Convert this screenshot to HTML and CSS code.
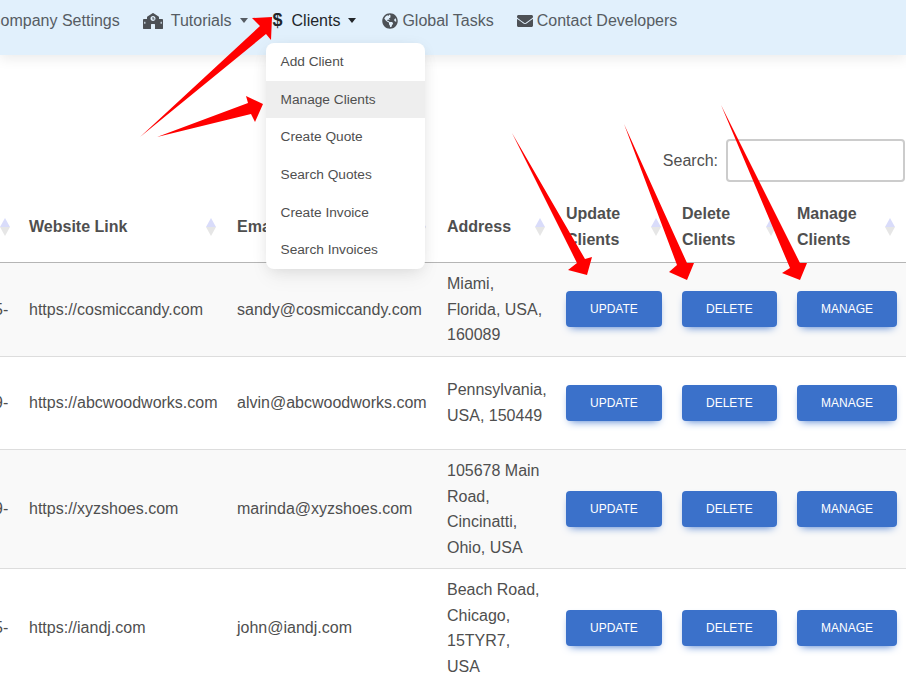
FILE: index.html
```html
<!DOCTYPE html>
<html lang="en">
<head>
    <meta charset="utf-8">
    <title>Manage Clients</title>
    <link rel="stylesheet" href="styles.css">
</head>
<body>
<nav class="topnav">
    <ul class="nav-list">
        <li class="nav-item nav-first">Company Settings</li>
        <li class="nav-item">
            <svg class="icon icon-school" viewBox="0 0 640 512"><path d="M0 224v272c0 8.84 7.16 16 16 16h80V192H32c-17.67 0-32 14.33-32 32zm360-48h-24v-40c0-4.42-3.58-8-8-8h-16c-4.42 0-8 3.58-8 8v64c0 4.42 3.58 8 8 8h48c4.42 0 8-3.58 8-8v-16c0-4.42-3.58-8-8-8zm137.75-63.96l-160-106.67a32.02 32.02 0 0 0-35.5 0l-160 106.67A32.002 32.002 0 0 0 128 138.66V512h128V368c0-8.84 7.16-16 16-16h96c8.84 0 16 7.16 16 16v144h128V138.67c0-10.7-5.35-20.69-14.25-26.63zM320 256c-44.18 0-80-35.82-80-80s35.82-80 80-80 80 35.82 80 80-35.82 80-80 80zm288-64h-64v320h80c8.84 0 16-7.16 16-16V224c0-17.67-14.33-32-32-32z"/><rect x="90" y="192" width="44" height="320"/><rect x="506" y="192" width="44" height="320"/><rect class="window" x="40" y="280" width="36" height="64" rx="6"/><rect class="window" x="564" y="280" width="36" height="64" rx="6"/></svg>
            <span>Tutorials</span>
            <span class="caret"></span>
        </li>
        <li class="nav-item nav-active">
            <span class="dollar">$</span>
            <span>Clients</span>
            <span class="caret"></span>
            <ul class="dropdown">
                <li>Add Client</li>
                <li class="hovered">Manage Clients</li>
                <li>Create Quote</li>
                <li>Search Quotes</li>
                <li>Create Invoice</li>
                <li>Search Invoices</li>
            </ul>
        </li>
        <li class="nav-item nav-tight nav-globe">
            <svg class="icon icon-square" viewBox="0 0 496 512"><path d="M248 8C111.03 8 0 119.03 0 256s111.03 248 248 248 248-111.03 248-248S384.97 8 248 8zm82.29 357.6c-3.9 3.88-7.99 7.95-11.31 11.28-2.99 3-5.1 6.7-6.17 10.71-1.51 5.66-2.73 11.38-4.77 16.87l-17.39 46.85c-13.76 3-28 4.69-42.65 4.69v-27.38c1.69-12.62-7.64-36.26-22.63-51.25-6-6-9.37-14.14-9.37-22.63v-32.01c0-11.64-6.27-22.34-16.46-27.97-14.37-7.95-34.81-19.06-48.81-26.11-11.48-5.78-22.1-13.14-31.65-21.75l-.8-.72a114.792 114.792 0 0 1-18.06-20.74c-9.38-13.77-24.66-36.42-34.59-51.14 20.47-45.5 57.36-82.04 103.2-101.89l24.01 12.01C203.48 89.74 216 82.01 216 70.11v-11.3c7.99-1.29 16.12-2.11 24.39-2.42l28.3 28.3c6.25 6.25 6.25 16.38 0 22.63L264 112l-10.34 10.34c-3.12 3.12-3.12 8.19 0 11.31l4.69 4.69c3.12 3.12 3.12 8.19 0 11.31l-8 8a8.008 8.008 0 0 1-5.66 2.34h-8.99c-2.08 0-4.08.81-5.58 2.27l-9.92 9.65a8.008 8.008 0 0 0-1.58 9.31l15.59 31.19c2.66 5.32-1.21 11.58-7.15 11.58h-5.64c-1.93 0-3.79-.7-5.24-1.96l-9.28-8.06a16.017 16.017 0 0 0-15.55-3.1l-31.17 10.39a11.95 11.95 0 0 0-8.17 11.34c0 4.53 2.56 8.66 6.61 10.69l11.08 5.54c9.41 4.71 19.79 7.16 30.31 7.16s22.59 27.29 32 32h66.75c8.49 0 16.62 3.37 22.63 9.37l13.69 13.69a30.503 30.503 0 0 1 8.93 21.57 46.536 46.536 0 0 1-13.72 32.98zM417 274.25c-5.79-1.45-10.84-5-14.15-9.97l-17.98-26.97a23.97 23.97 0 0 1 0-26.62l19.59-29.38c2.32-3.47 5.5-6.29 9.24-8.15l12.98-6.49C440.2 193.59 448 223.87 448 256c0 8.67-.74 17.16-1.82 25.54L417 274.25z"/></svg>
            <span>Global Tasks</span>
        </li>
        <li class="nav-item nav-tight">
            <svg class="icon icon-square" viewBox="0 0 512 512"><path d="M502.3 190.8c3.9-3.1 9.7-.2 9.7 4.7V400c0 26.5-21.5 48-48 48H48c-26.5 0-48-21.5-48-48V195.6c0-5 5.7-7.8 9.7-4.7 22.4 17.4 52.1 39.5 154.1 113.6 21.1 15.4 56.7 47.8 92.2 47.6 35.7.3 72-32.8 92.3-47.6 102-74.1 131.6-96.3 154-113.7zM256 320c23.2.4 56.6-29.2 73.4-41.4 132.7-96.3 142.8-104.7 173.4-128.7 5.8-4.5 9.2-11.5 9.2-18.9v-19c0-26.5-21.5-48-48-48H48C21.5 64 0 85.5 0 112v19c0 7.4 3.4 14.3 9.2 18.9 30.6 23.9 40.7 32.4 173.4 128.7 16.8 12.2 50.2 41.8 73.4 41.4z"/></svg>
            <span>Contact Developers</span>
        </li>
    </ul>
</nav>

<main>
    <div class="search-row">
        <label for="search">Search:</label>
        <input id="search" type="text">
    </div>

    <table class="clients">
        <colgroup>
            <col class="col-cut">
            <col class="col-link">
            <col class="col-email">
            <col class="col-address">
            <col class="col-update">
            <col class="col-delete">
            <col class="col-manage">
        </colgroup>
        <thead>
            <tr>
                <th class="cut"><div class="th-inner"><span></span><svg class="sort" viewBox="0 0 10 18"><polygon class="up" points="5,0 10,9 0,9"/><polygon class="down" points="0,9 10,9 5,18"/></svg></div></th>
                <th><div class="th-inner"><span>Website Link</span><svg class="sort" viewBox="0 0 10 18"><polygon class="up" points="5,0 10,9 0,9"/><polygon class="down" points="0,9 10,9 5,18"/></svg></div></th>
                <th><div class="th-inner"><span>Email</span><svg class="sort" viewBox="0 0 10 18"><polygon class="up" points="5,0 10,9 0,9"/><polygon class="down" points="0,9 10,9 5,18"/></svg></div></th>
                <th><div class="th-inner"><span>Address</span><svg class="sort" viewBox="0 0 10 18"><polygon class="up" points="5,0 10,9 0,9"/><polygon class="down" points="0,9 10,9 5,18"/></svg></div></th>
                <th><div class="th-inner"><span>Update Clients</span><svg class="sort" viewBox="0 0 10 18"><polygon class="up" points="5,0 10,9 0,9"/><polygon class="down" points="0,9 10,9 5,18"/></svg></div></th>
                <th><div class="th-inner"><span>Delete Clients</span><svg class="sort" viewBox="0 0 10 18"><polygon class="up" points="5,0 10,9 0,9"/><polygon class="down" points="0,9 10,9 5,18"/></svg></div></th>
                <th><div class="th-inner"><span>Manage Clients</span><svg class="sort" viewBox="0 0 10 18"><polygon class="up" points="5,0 10,9 0,9"/><polygon class="down" points="0,9 10,9 5,18"/></svg></div></th>
            </tr>
        </thead>
        <tbody>
            <tr class="odd">
                <td class="cut">5-</td>
                <td>https://cosmiccandy.com</td>
                <td>sandy@cosmiccandy.com</td>
                <td class="address">Miami, Florida, USA, 160089</td>
                <td><button class="btn">Update</button></td>
                <td><button class="btn">Delete</button></td>
                <td><button class="btn">Manage</button></td>
            </tr>
            <tr>
                <td class="cut">9-</td>
                <td>https://abcwoodworks.com</td>
                <td>alvin@abcwoodworks.com</td>
                <td class="address">Pennsylvania, USA, 150449</td>
                <td><button class="btn">Update</button></td>
                <td><button class="btn">Delete</button></td>
                <td><button class="btn">Manage</button></td>
            </tr>
            <tr class="odd">
                <td class="cut">9-</td>
                <td>https://xyzshoes.com</td>
                <td>marinda@xyzshoes.com</td>
                <td class="address">105678 Main Road, Cincinatti, Ohio, USA</td>
                <td><button class="btn">Update</button></td>
                <td><button class="btn">Delete</button></td>
                <td><button class="btn">Manage</button></td>
            </tr>
            <tr>
                <td class="cut">5-</td>
                <td>https://iandj.com</td>
                <td>john@iandj.com</td>
                <td class="address">Beach Road, Chicago, 15TYR7, USA</td>
                <td><button class="btn">Update</button></td>
                <td><button class="btn">Delete</button></td>
                <td><button class="btn">Manage</button></td>
            </tr>
        </tbody>
    </table>
</main>

<!-- red annotation arrows drawn over the screenshot -->
<svg class="arrows" viewBox="0 0 906 673">
    <polygon points="140,137 260,26 252,18 272,17 271,40 266,34"/>
    <polygon points="157,137 248,103 246,96 263,104 255,122 251,114"/>
    <polygon points="512,133 577,263 568,270 587,275 592,257 585,259"/>
    <polygon points="624,124 677,265 669,272 687,280 694,263 687,263"/>
    <polygon points="721,105 790,268 782,273 800,280 807,263 800,263"/>
</svg>
</body>
</html>
```

FILE: styles.css
```css
html, body { height: 100%; }
body {
    margin: 0;
    width: 906px;
    height: 673px;
    overflow: hidden;
    position: relative;
    font-family: "Liberation Sans", Arial, sans-serif;
    font-size: 16px;
    line-height: 25.5px;
    color: #4f4f4f;
    background: #fff;
}

/* top nav */
.topnav {
    height: 55px;
    background: #e1f0fc;
    box-shadow: 0 4px 12px rgba(0, 0, 0, 0.08);
    position: relative;
    z-index: 2;
}
.nav-list {
    display: flex;
    gap: 24px;
    margin: 0 0 0 -11px;
    padding: 8px 0 0;
    list-style: none;
    color: #565c63;
    white-space: nowrap;
}
.nav-item {
    display: flex;
    align-items: center;
    gap: 8px;
    position: relative;
}
.nav-first { margin-right: -1px; }
.nav-tight { gap: 4px; }
.nav-active { color: #22262a; gap: 8px; margin-left: 1px; }
.nav-globe { margin-left: 2px; margin-right: -1px; }
.icon { fill: #4d5156; display: block; }
.icon-school { width: 20px; height: 16px; }
.icon-square { width: 16px; height: 16px; }
.window { fill: #e1f0fc; }
.dollar { font-weight: 700; font-size: 18px; margin-right: 1px; }
.caret {
    width: 0;
    height: 0;
    border-left: 4.5px solid transparent;
    border-right: 4.5px solid transparent;
    border-top: 5px solid currentColor;
}

/* dropdown */
.dropdown {
    position: absolute;
    top: 35px;
    left: -7px;
    width: 159px;
    margin: 0;
    padding: 0;
    list-style: none;
    background: #fff;
    border-radius: 8px;
    overflow: hidden;
    box-shadow: 0 2px 15px -3px rgba(0, 0, 0, 0.1), 0 10px 20px -2px rgba(0, 0, 0, 0.06);
    color: #4f4f4f;
    font-size: 13.7px;
    line-height: 37.67px;
}
.dropdown li { padding: 0 15px; }
.dropdown .hovered { background: #eee; }

/* search */
.search-row {
    display: flex;
    justify-content: flex-end;
    align-items: center;
    gap: 8px;
    padding: 84px 1px 0 0;
}
.search-row input {
    box-sizing: border-box;
    width: 179px;
    height: 43px;
    border: 2px solid #ccc;
    border-radius: 4px;
    background: #fff;
}

/* table */
.clients {
    table-layout: fixed;
    width: 906px;
    margin-top: 11px;
    border-collapse: collapse;
}
.col-cut { width: 19px; }
.col-link { width: 208px; }
.col-email { width: 210px; }
.col-address { width: 119px; }
.col-update { width: 116px; }
.col-delete { width: 115px; }
.col-manage { width: 119px; }

.clients th {
    padding: 8px 11px 10px 10px;
    text-align: left;
    font-weight: 700;
    border-bottom: 1px solid #b5b5b5;
}
.clients th.cut { padding-left: 0; }
.th-inner {
    display: flex;
    justify-content: space-between;
    align-items: center;
}
.sort { width: 10px; height: 18px; flex: none; }
.sort .up { fill: #d9dcfa; }
.sort .down { fill: #e6e6e6; }

.clients td {
    padding: 8px 10px;
    height: 76.5px;
    border-bottom: 1px solid #ddd;
    white-space: nowrap;
}
.clients td.cut { padding: 0; text-indent: -6px; }
.clients td.address { white-space: normal; }
.odd td { background: #f9f9f9; }

.btn {
    height: 36px;
    padding: 0 24px;
    border: 0;
    border-radius: 4px;
    background: #3b71ca;
    color: #fff;
    font-family: inherit;
    font-size: 12px;
    text-transform: uppercase;
    box-shadow: 0 4px 9px -4px #3b71ca;
}

.arrows {
    position: absolute;
    left: 0;
    top: 0;
    width: 906px;
    height: 673px;
    z-index: 3;
    fill: #f00;
    pointer-events: none;
}
```
